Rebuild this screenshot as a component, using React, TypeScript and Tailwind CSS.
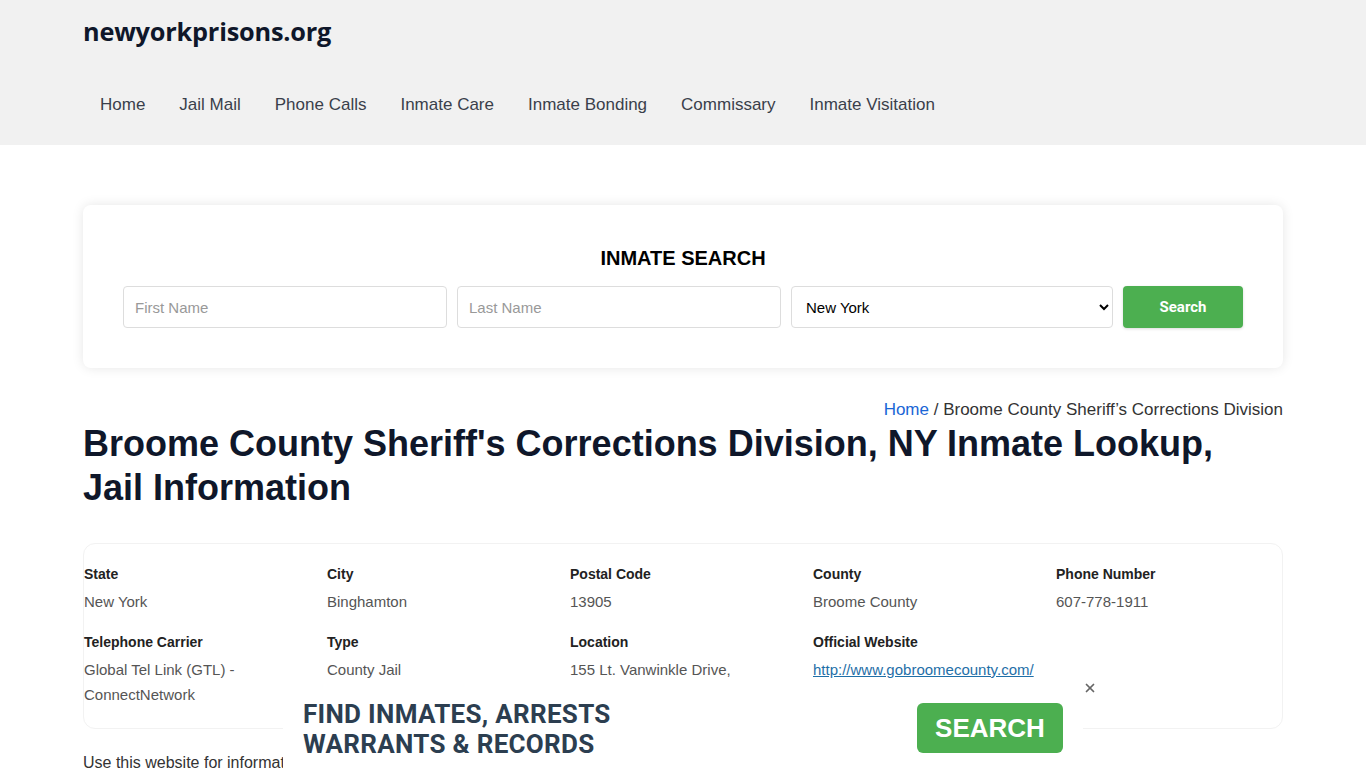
import { X } from 'lucide-react';

const NAV = ['Home', 'Jail Mail', 'Phone Calls', 'Inmate Care', 'Inmate Bonding', 'Commissary', 'Inmate Visitation'];

const FACTS = [
  { label: 'State', value: ['New York'] },
  { label: 'City', value: ['Binghamton'] },
  { label: 'Postal Code', value: ['13905'] },
  { label: 'County', value: ['Broome County'] },
  { label: 'Phone Number', value: ['607-778-1911'] },
  { label: 'Telephone Carrier', value: ['Global Tel Link (GTL) -', 'ConnectNetwork'] },
  { label: 'Type', value: ['County Jail'] },
  { label: 'Location', value: ['155 Lt. Vanwinkle Drive,', 'Binghamton, NY 13905'] },
  { label: 'Official Website', value: [], link: 'http://www.gobroomecounty.com/' },
];

export default function App() {
  return (
    <div className="min-h-screen bg-white font-['Liberation_Sans',Arial,sans-serif] text-[#333]">
      {/* Header */}
      <header className="h-[145px] bg-[#f1f1f1]">
        <div className="mx-auto w-[1200px]">
          <div className="flex h-16 items-center">
            <a className="font-['Open_Sans',sans-serif] text-[25.3px] font-bold tracking-[-0.2px] text-[#0f172a]">newyorkprisons.org</a>
          </div>
          <nav className="mt-[21px] flex h-10 items-center">
            {NAV.map((item) => (
              <a key={item} className="px-[17px] text-[17px] text-[#3a3f4b]">
                {item}
              </a>
            ))}
          </nav>
        </div>
      </header>

      <main className="mx-auto w-[1200px]">
        {/* Search card */}
        <section className="mt-[60px] rounded-lg bg-white px-10 pt-[41px] pb-10 shadow-[0_0_12px_rgba(0,0,0,0.1)]">
          <h2 className="mb-4 text-center text-[20px] leading-6 font-bold text-black">INMATE SEARCH</h2>
          <div className="flex gap-[10px]">
            <input
              placeholder="First Name"
              className="h-[42px] flex-1 rounded border border-[#ddd] px-[11px] text-[15px] text-[#333] placeholder:text-[#999]"
            />
            <input
              placeholder="Last Name"
              className="h-[42px] flex-1 rounded border border-[#ddd] px-[11px] text-[15px] text-[#333] placeholder:text-[#999]"
            />
            <select
              defaultValue="New York"
              className="h-[42px] flex-1 rounded border border-[#ddd] bg-white px-[10px] text-[15px] text-black"
            >
              <option>New York</option>
            </select>
            <button className="h-[42px] w-[120px] rounded bg-[#4caf50] font-['Roboto',sans-serif] text-[15px] font-bold text-white shadow-[0_1px_3px_rgba(0,0,0,0.15)]">
              Search
            </button>
          </div>
        </section>

        {/* Breadcrumb */}
        <div className="mt-[30px] text-right text-[17px] leading-6 text-[#333]">
          <a className="text-[#1a66d6]">Home</a> / Broome County Sheriff’s Corrections Division
        </div>

        <h1 className="max-w-[1150px] text-[36px] leading-[44px] font-bold text-[#0f172a]">
          Broome County Sheriff's Corrections Division, NY Inmate Lookup, Jail Information
        </h1>

        {/* Facts card */}
        <section className="mt-[33px] rounded-xl border border-[#f2f2f2] pt-5 pb-[21px]">
          <div className="grid grid-cols-5 gap-x-[17px] gap-y-[18px]">
            {FACTS.map((f) => (
              <div key={f.label}>
                <div className="text-[14px] leading-5 font-bold text-[#222]">{f.label}</div>
                <div className="mt-[5px] text-[15px] leading-[25px] text-[#555]">
                  {f.value.map((v) => (
                    <div key={v}>{v}</div>
                  ))}
                  {f.link && <a className="text-[#1f6fa8] underline">{f.link}</a>}
                </div>
              </div>
            ))}
          </div>
        </section>

        <p className="mt-[22px] text-[16px] leading-6 text-[#333]">Use this website for information purposes only.</p>
      </main>

      {/* Bottom ad bar */}
      <div className="fixed bottom-0 left-1/2 h-[88px] w-[800px] -translate-x-1/2 bg-white pt-2">
        <div className="flex h-full items-center justify-between px-5">
          <div className="pt-[2px] font-['Roboto',sans-serif] text-[26px] leading-[30px] font-bold tracking-[0.3px] text-[#2c3e50]">
            FIND INMATES, ARRESTS
            <br />
            WARRANTS &amp; RECORDS
          </div>
          <button className="flex h-[50px] w-[146px] items-center justify-center rounded-md bg-[#4caf50] font-['Liberation_Sans',Arial,sans-serif] text-[26px] font-bold text-white">
            SEARCH
          </button>
        </div>
        <X size={14} strokeWidth={3} className="absolute top-[1px] right-[-14px] text-[#666]" />
      </div>
    </div>
  );
}
